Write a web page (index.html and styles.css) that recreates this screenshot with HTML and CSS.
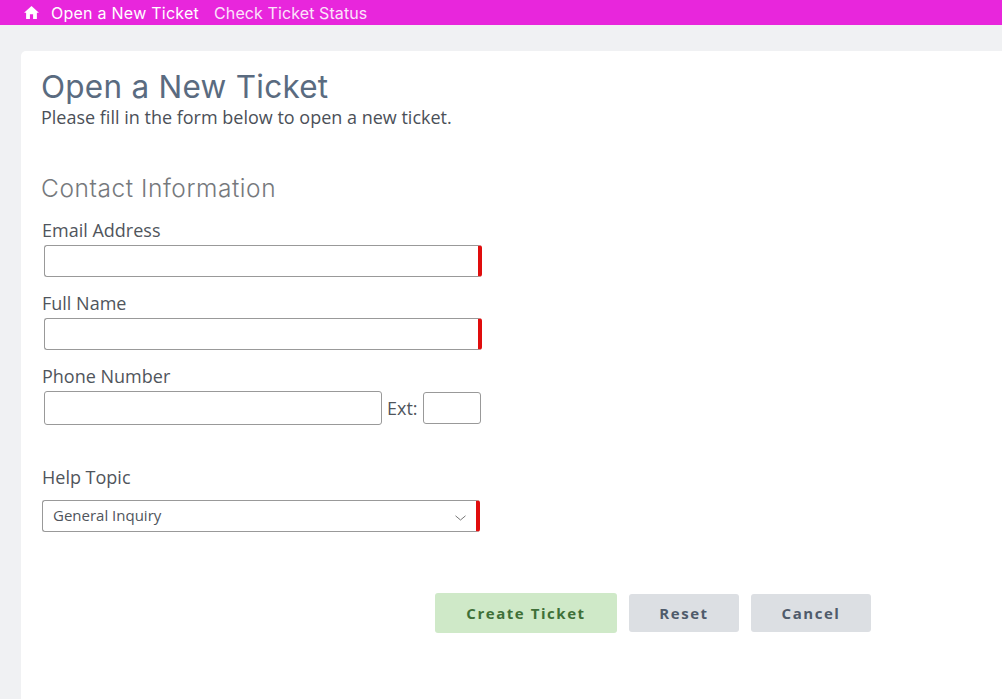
FILE: index.html
```html
<!DOCTYPE html>
<html lang="en">
<head>
  <meta charset="UTF-8">
  <meta name="viewport" content="width=device-width, initial-scale=1.0">
  <title>Open a New Ticket</title>
  <link rel="stylesheet" href="styles.css">
</head>
<body>
  <nav class="topnav">
    <a class="home-link" href="#" aria-label="Home">
      <svg class="home-icon" viewBox="0 0 16 14" width="15" height="13">
        <path d="M8 0 L16 7.2 H13.8 V14 H9.7 V9 H6.3 V14 H2.2 V7.2 H0 Z" fill="#fff"/>
      </svg>
    </a>
    <a class="nav-link active" href="#">Open a New Ticket</a>
    <a class="nav-link" href="#">Check Ticket Status</a>
  </nav>

  <main class="card">
    <h1>Open a New Ticket</h1>
    <p class="intro">Please fill in the form below to open a new ticket.</p>

    <form class="ticket-form">
      <h2>Contact Information</h2>

      <div class="field">
        <label for="email">Email Address</label>
        <input class="text-input required" type="text" id="email">
      </div>
      <div class="field">
        <label for="name">Full Name</label>
        <input class="text-input required" type="text" id="name">
      </div>
      <div class="field">
        <label for="phone">Phone Number</label>
        <div class="phone-row">
          <input class="text-input phone-input" type="text" id="phone">
          <label class="ext-label" for="ext">Ext:</label>
          <input class="text-input ext-input" type="text" id="ext">
        </div>
      </div>

      <div class="topic">
        <label for="topic">Help Topic</label>
        <div class="select-box" id="topic">
          <span class="select-value">General Inquiry</span>
          <svg class="chevron" viewBox="0 0 11 6" width="11" height="6">
            <path d="M0.5 0.8 L5.5 5 L10.5 0.8" fill="none" stroke="#777" stroke-width="1"/>
          </svg>
        </div>
      </div>

      <div class="buttons">
        <button class="btn btn-create" type="button">Create Ticket</button>
        <button class="btn btn-plain" type="button">Reset</button>
        <button class="btn btn-plain" type="button">Cancel</button>
      </div>
    </form>
  </main>
</body>
</html>
```

FILE: styles.css
```css
html, body {
  height: 100%;
}
body {
  margin: 0;
  padding: 0;
  height: 699px;
  overflow: hidden;
  font-family: 'Open Sans', sans-serif;
  background-color: #f0f1f3;
  color: #4b5058;
  display: flex;
  flex-direction: column;
}
.topnav {
  height: 25px;
  flex: none;
  box-sizing: border-box;
  display: flex;
  align-items: center;
  padding-left: 24px;
  background-color: #e826dc;
  font-family: 'Inter', sans-serif;
  font-size: 16px;
  letter-spacing: 0.1px;
}
.home-link {
  display: flex;
  margin-right: 12px;
}
.nav-link {
  color: #fbe3fa;
  text-decoration: none;
  margin-right: 15px;
  white-space: nowrap;
}
.nav-link.active {
  color: #fff;
  letter-spacing: 0.25px;
}
.card {
  flex: 1;
  margin: 26px 0 0 21px;
  padding: 18px 0 0 20px;
  background-color: white;
  border-radius: 5px 0 0 0;
}
h1 {
  margin: 0;
  font-family: 'Inter', sans-serif;
  font-size: 31.5px;
  line-height: 36px;
  font-weight: 400;
  letter-spacing: 0.25px;
  color: #5a6b80;
}
.intro {
  margin: 0;
  font-size: 18px;
  line-height: 24px;
  color: #4b5058;
}
.ticket-form {
  width: 441px;
  padding-left: 1px;
}
h2 {
  margin: 45px 0 0 -1px;
  font-family: 'Inter', sans-serif;
  font-size: 24.5px;
  line-height: 28px;
  font-weight: 300;
  letter-spacing: 0.55px;
  color: #76797d;
}
.field {
  margin-top: 15px;
}
.field + .field {
  margin-top: 13px;
}
label {
  display: block;
  font-size: 18px;
  line-height: 26px;
  color: #50555c;
}
.text-input {
  display: block;
  box-sizing: border-box;
  height: 32px;
  padding: 0 8px;
  background: white;
  border: 1px solid #999;
  border-radius: 3px;
  outline: none;
}
.field > .text-input {
  margin: 2px 0 0 2px;
  width: 438px;
}
.required {
  border-right: 4px solid #e00d0d;
}
.phone-row {
  display: flex;
  align-items: center;
  margin: 2px 0 0 2px;
}
.phone-input {
  width: 338px;
  height: 34px;
}
.ext-label {
  margin: 0 5px 0 5px;
}
.ext-input {
  width: 58px;
}
.topic {
  margin-top: 39px;
}
.select-box {
  box-sizing: border-box;
  width: 438px;
  height: 32px;
  margin-top: 10px;
  padding: 0 10px;
  display: flex;
  align-items: center;
  justify-content: space-between;
  border: 1px solid #999;
  border-right: 4px solid #e00d0d;
  border-radius: 3px;
  font-size: 15px;
  color: #50555c;
}
.select-value {
  padding-bottom: 2px;
}
.chevron {
  margin-top: 3px;
}
.buttons {
  display: flex;
  align-items: center;
  gap: 12px;
  margin-top: 61px;
  margin-left: 393px;
  width: 460px;
}
.btn {
  height: 38px;
  padding: 0;
  border: none;
  border-radius: 3px;
  font-family: 'Open Sans', sans-serif;
  font-size: 15px;
  font-weight: 700;
  letter-spacing: 1.55px;
}
.btn-create {
  width: 182px;
  height: 40px;
  background-color: #cfe9c8;
  color: #3f7038;
}
.btn-plain {
  width: 110px;
  background-color: #dcdfe3;
  color: #4f5b6b;
}
.btn-plain:last-child {
  width: 120px;
}
```
